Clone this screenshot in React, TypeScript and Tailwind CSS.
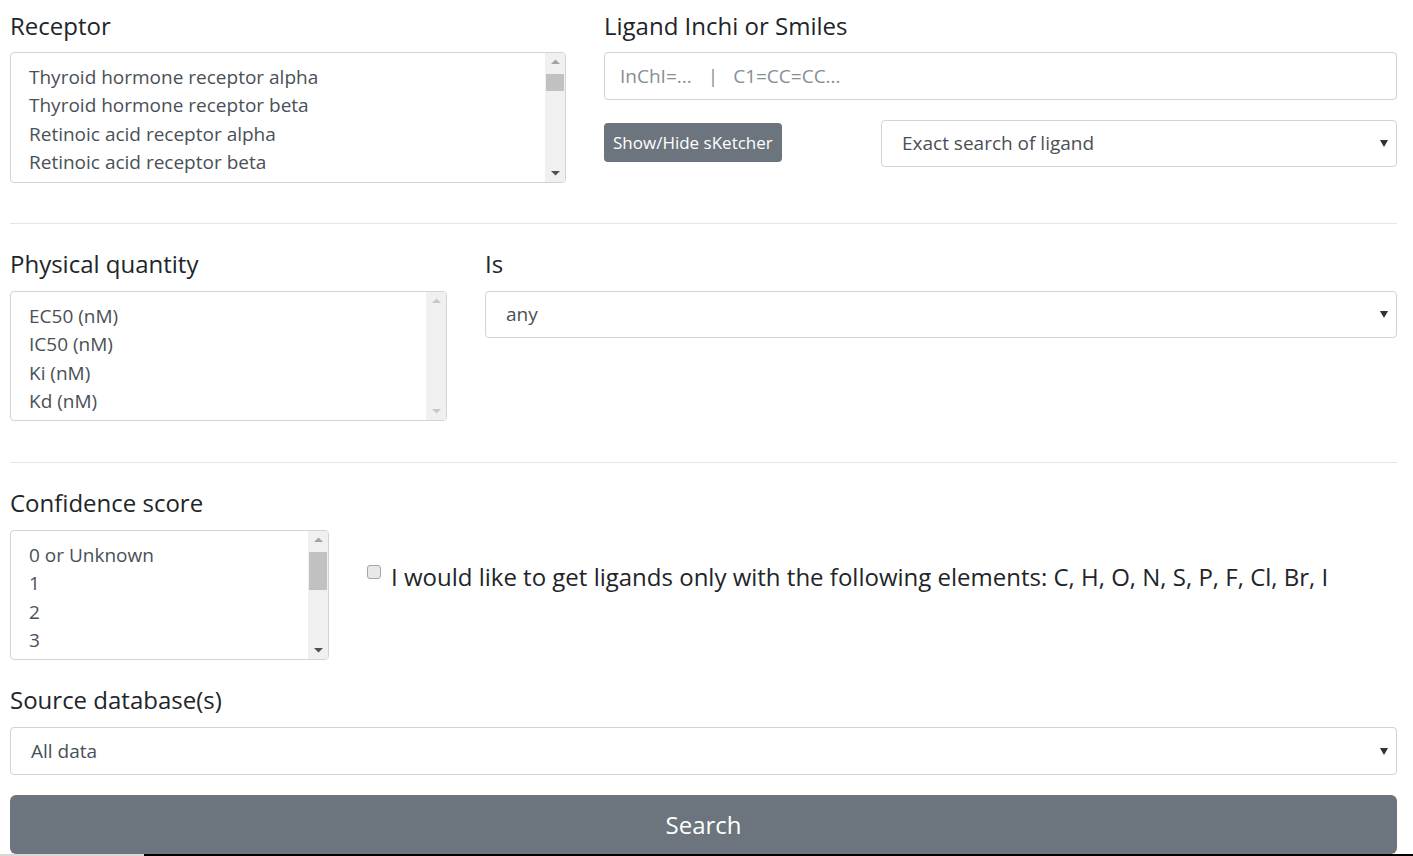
import React from "react";

function Arrow({ dir, light }: { dir: "up" | "down"; light?: boolean }) {
  return (
    <svg width="9" height="6" viewBox="0 0 9 6" className="block">
      {dir === "up" ? (
        <polygon points="0,5 4.5,0.5 9,5" fill={light ? "#c7c7c7" : "#a3a3a3"} />
      ) : (
        <polygon points="0,1 4.5,5.5 9,1" fill={light ? "#c7c7c7" : "#505050"} />
      )}
    </svg>
  );
}

function ListBox({
  items,
  height,
  thumbTop,
  thumbHeight,
  light,
}: {
  items: string[];
  height: number;
  thumbTop?: number;
  thumbHeight?: number;
  light?: boolean;
}) {
  return (
    <div
      className="flex border border-[#ced4da] rounded-[4px] overflow-hidden bg-white"
      style={{ height }}
    >
      <div className="flex-1 pl-[18px] pt-[10px] text-[19px] leading-[28.3px] text-[#495057]">
        {items.map((it) => (
          <div key={it} className="whitespace-nowrap">
            {it}
          </div>
        ))}
      </div>
      <div className="w-[20px] bg-[#f0f0f0] flex flex-col items-center justify-between py-[6px] relative">
        <Arrow dir="up" light={light} />
        <Arrow dir="down" light={light} />
        {thumbHeight ? (
          <div
            className="absolute left-[1px] right-[1px] bg-[#c1c1c1]"
            style={{ top: thumbTop, height: thumbHeight }}
          />
        ) : null}
      </div>
    </div>
  );
}

function Select({ text, h = 47 }: { text: string; h?: number }) {
  return (
    <div
      className="border border-[#ced4da] rounded-[4px] flex items-center justify-between pl-[20px] pr-[8px] bg-white"
      style={{ height: h }}
    >
      <span className="text-[19px] text-[#495057]">{text}</span>
      <svg width="8" height="7" viewBox="0 0 8 7">
        <polygon points="0,0 8,0 4,7" fill="#333" />
      </svg>
    </div>
  );
}

export default function App() {
  return (
    <div className="w-[1413px] h-[856px] bg-white overflow-hidden flex flex-col font-['Open_Sans','Noto_Sans',sans-serif] text-[#212529]">
      <div className="flex-1 pl-[10px] pr-[16px] pt-[8px] flex flex-col">
        {/* Row 1 */}
        <div className="flex gap-[38px]">
          <div className="w-[556px] flex flex-col">
            <label className="text-[24px] leading-[36px] mb-[8px]">Receptor</label>
            <ListBox
              height={131}
              thumbTop={21}
              thumbHeight={17}
              items={[
                "Thyroid hormone receptor alpha",
                "Thyroid hormone receptor beta",
                "Retinoic acid receptor alpha",
                "Retinoic acid receptor beta",
              ]}
            />
          </div>
          <div className="flex-1 flex flex-col">
            <label className="text-[24px] leading-[36px] mb-[8px]">Ligand Inchi or Smiles</label>
            <div className="h-[48px] border border-[#ced4da] rounded-[4px] flex items-center pl-[15px] text-[19px] text-[#868e96] whitespace-pre">
              <span>InChI=...</span>
              <span className="ml-[16px]">|</span>
              <span className="ml-[15px]">C1=CC=CC...</span>
            </div>
            <div className="flex mt-[20px] gap-[38px] items-start">
              <div className="w-[239px] pt-[3px]">
                <button className="h-[39px] px-[9px] bg-[#6c757d] text-white text-[17px] rounded-[4px] whitespace-nowrap">
                  Show/Hide sKetcher
                </button>
              </div>
              <div className="flex-1">
                <Select text="Exact search of ligand" />
              </div>
            </div>
          </div>
        </div>

        <div className="h-px bg-[#e5e5e5] mt-[40px]" />

        {/* Row 2 */}
        <div className="flex gap-[38px] mt-[22px]">
          <div className="w-[437px] flex flex-col">
            <label className="text-[24px] leading-[36px] mb-[9px]">Physical quantity</label>
            <ListBox
              height={130}
              light
              items={["EC50 (nM)", "IC50 (nM)", "Ki (nM)", "Kd (nM)"]}
            />
          </div>
          <div className="flex-1 flex flex-col">
            <label className="text-[24px] leading-[36px] mb-[9px]">Is</label>
            <Select text="any" />
          </div>
        </div>

        <div className="h-px bg-[#e5e5e5] mt-[41px]" />

        {/* Row 3 */}
        <div className="flex gap-[38px] mt-[22px]">
          <div className="w-[319px] flex flex-col">
            <label className="text-[24px] leading-[36px] mb-[9px]">Confidence score</label>
            <ListBox
              height={130}
              thumbTop={21}
              thumbHeight={38}
              items={["0 or Unknown", "1", "2", "3"]}
            />
          </div>
          <div className="flex-1 flex items-start pt-[77px]">
            <div className="w-[14px] h-[14px] mt-[3px] border border-[#a6a6a6] rounded-[3px] bg-[#e8e8e8]" />
            <span className="ml-[10px] text-[24px] leading-[30px] whitespace-nowrap">
              I would like to get ligands only with the following elements: C, H, O, N, S, P, F, Cl, Br, I
            </span>
          </div>
        </div>

        {/* Row 4 */}
        <div className="flex flex-col mt-[22px]">
          <label className="text-[24px] leading-[36px] mb-[9px]">Source database(s)</label>
          <Select text="All data" h={48} />
        </div>

        <button className="mt-[20px] h-[59px] bg-[#6c757d] text-white text-[24px] rounded-[6px]">
          Search
        </button>
      </div>
      <div className="flex h-[2px]">
        <div className="w-[144px] bg-[#d8d8d8]" />
        <div className="flex-1 bg-black" />
      </div>
    </div>
  );
}
